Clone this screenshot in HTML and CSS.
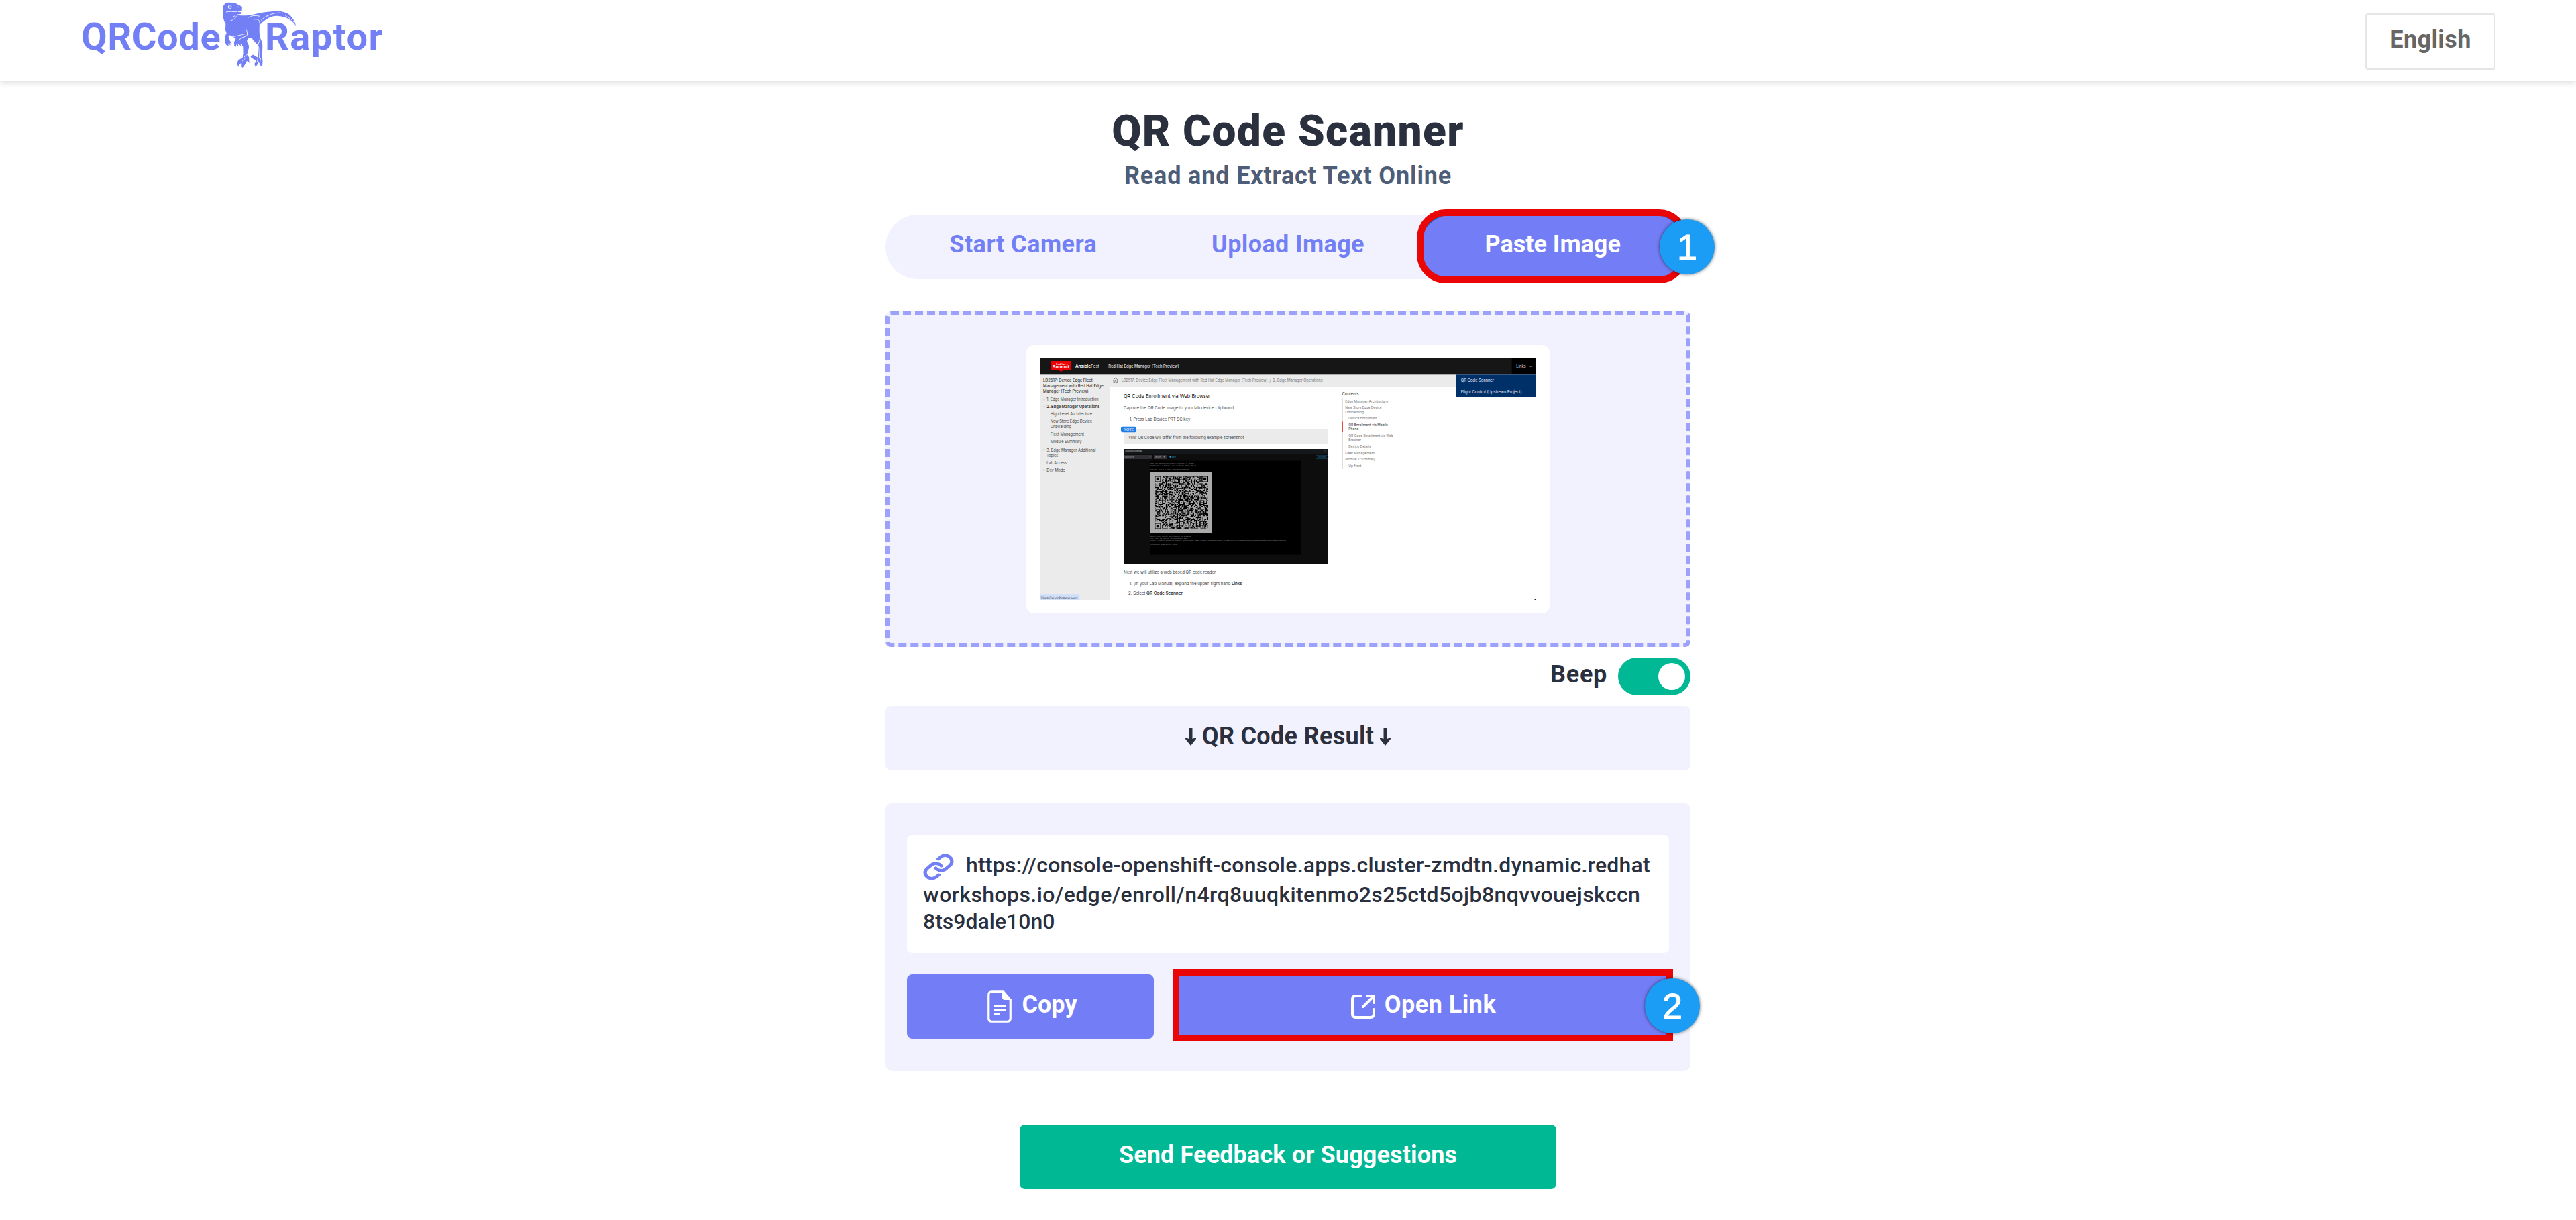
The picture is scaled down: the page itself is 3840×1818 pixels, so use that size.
FILE: index.html
```html
<!DOCTYPE html>
<html lang="en">
<head>
<meta charset="utf-8">
<title>QR Code Scanner</title>
<link rel="stylesheet" href="styles.css">
</head>
<body>
<header class="header">
  <a class="brand">
    <span class="brand-first">QRCode</span>
    <svg class="brand-raptor" viewBox="690 5 340 302">
      <path fill="#737ff5" d="M712 14L722 12L747 13L760 19L776 27L780 33L779 49L762 54L778 56L777 64L763 66L759 70C790 71 805 72 820 69C850 62 880 55 920 52C955 49 980 55 995 67C1010 80 1020 98 1024 116C1005 92 985 75 945 73C915 71 890 85 866 110L861 92C862 120 858 145 864 170L872 188C877 205 873 225 873 255L875 275L874 292L867 298L861 285L856 280L852 290L843 301L838 288L847 275L838 268L824 260L820 252L833 246L842 252L852 258L856 240L858 212L854 203C840 190 835 185 829 175C825 170 815 168 809 176C800 185 808 192 813 205C815 220 808 230 806 245L814 258L815 285L808 275L800 278L798 288L786 304L778 302L778 285L769 290L766 302L760 285L766 270L785 260L788 240L787 210L775 195L779 211L770 200L764 196L767 210L757 200L756 210L748 208L747 190L755 172L738 165L728 158L722 165L725 178L738 200L728 193L731 206L721 195L722 207L712 203L705 185L706 165L713 150L708 135L709 108C697 90 696 60 696 40C698 25 705 18 712 14Z"/>
      <g fill="none" stroke="#fff" stroke-width="2.500" stroke-linecap="round">
        <circle cx="728" cy="32" r="7.500" stroke-width="2.500"/>
        <circle cx="728" cy="32" r="2" stroke-width="1.500"/>
        <path d="M765 31l3 4M712 55C730 49 745 57 762 53M730 95Q752 88 758 73M742 76l10-4M810 80Q830 66 862 74M835 88C855 85 862 92 861 102"/>
        <path d="M738 166Q770 160 795 153M802 133Q812 160 800 163Q780 168 768 180M868 92Q880 78 900 70M895 73Q930 54 965 60M978 72Q1005 85 1016 102M853 208L864 172M862 215L860 262M790 258L806 246M796 264L778 280M854 262L850 280M866 262L862 284"/>
      </g>
    </svg>
    <span class="brand-second">Raptor</span>
  </a>
  <button class="language"><span class="label">English</span></button>
</header>

<main class="main">
  <h1 class="title">QR Code Scanner</h1>
  <p class="subtitle">Read and Extract Text Online</p>

  <nav class="tabs">
    <button class="tab tab-camera">Start Camera</button>
    <button class="tab tab-upload">Upload Image</button>
    <button class="tab tab-active">Paste Image
      <span class="mark mark-round"></span>
      <span class="step step-one">1</span>
    </button>
  </nav>

  <section class="dropzone">
    <div class="preview">
      <svg class="shot" viewBox="90 102 2220 1080">
        <rect x="90" y="102" width="2220" height="1080" fill="#fff"/>
        <rect x="90" y="174" width="312" height="1008" fill="#ebebeb"/>
        <rect x="402" y="174" width="1908" height="54" fill="#ebebeb"/>
        <rect x="90" y="102" width="2220" height="72" fill="#161616"/>
        <rect x="90" y="173" width="2220" height="3" fill="#8a8a8a"/>
        <path d="M138 114h93v42h-38l-8 7-8-7h-39z" fill="#e00"/>
        <g fill="#fff">
          <text x="163" y="131" font-size="9" font-weight="700" textLength="42">Red Hat</text>
          <text x="147" y="147" font-size="19" font-weight="700" textLength="75" lengthAdjust="spacingAndGlyphs">Summit</text>
          <text x="249" y="144" font-size="20" font-weight="600" textLength="69" lengthAdjust="spacingAndGlyphs">Ansible</text>
          <text x="319" y="144" font-size="20" font-weight="300" textLength="37" lengthAdjust="spacingAndGlyphs">Fest</text>
          <text x="397" y="145" font-size="19" textLength="316" lengthAdjust="spacingAndGlyphs">Red Hat Edge Manager (Tech Preview)</text>
        </g>
        <g fill="#444" font-size="18">
          <g font-weight="500" fill="#333">
            <text x="105" y="208" textLength="221" lengthAdjust="spacingAndGlyphs">LB2517: Device Edge Fleet</text>
            <text x="105" y="232" textLength="269" lengthAdjust="spacingAndGlyphs">Management with Red Hat Edge</text>
            <text x="105" y="256" textLength="203" lengthAdjust="spacingAndGlyphs">Manager (Tech Preview)</text>
            <text x="121" y="325" font-weight="600" textLength="237" lengthAdjust="spacingAndGlyphs">2. Edge Manager Operations</text>
          </g>
          <text x="121" y="292" textLength="232" lengthAdjust="spacingAndGlyphs">1. Edge Manager Introduction</text>
          <text x="137" y="358" textLength="187" lengthAdjust="spacingAndGlyphs">High Level Architecture</text>
          <text x="137" y="391" textLength="187" lengthAdjust="spacingAndGlyphs">New Store Edge Device</text>
          <text x="137" y="415" textLength="94" lengthAdjust="spacingAndGlyphs">Onboarding</text>
          <text x="137" y="448" textLength="151" lengthAdjust="spacingAndGlyphs">Fleet Management</text>
          <text x="137" y="481" textLength="140" lengthAdjust="spacingAndGlyphs">Module Summary</text>
          <text x="121" y="518" textLength="219" lengthAdjust="spacingAndGlyphs">3. Edge Manager Additional</text>
          <text x="121" y="542" textLength="50" lengthAdjust="spacingAndGlyphs">Topics</text>
          <text x="121" y="575" textLength="90" lengthAdjust="spacingAndGlyphs">Lab Access</text>
          <text x="121" y="608" textLength="82" lengthAdjust="spacingAndGlyphs">Dev Mode</text>
        </g>
        <path d="M107 282l5 4-5 4zM105 317h9l-4 5zM107 507l5 4-5 4zM107 597l5 4-5 4z" fill="#999"/>
        <path d="M420 197l9-7 8 7v12h-6v-7h-5v7h-6z" fill="none" stroke="#555" stroke-width="2"/>
        <text x="455" y="208" font-size="17" fill="#777" textLength="900" lengthAdjust="spacingAndGlyphs">LB2517: Device Edge Fleet Management with Red Hat Edge Manager (Tech Preview)&#160; / &#160;2. Edge Manager Operations</text>
        <g fill="#444" font-size="19">
          <text x="465" y="278" font-size="23" fill="#111" textLength="390" lengthAdjust="spacingAndGlyphs">QR Code Enrollment via Web Browser</text>
          <text x="465" y="329" textLength="492" lengthAdjust="spacingAndGlyphs">Capture the QR Code image to your lab device clipboard</text>
          <text x="491" y="382" textLength="272" lengthAdjust="spacingAndGlyphs">1. Press Lab Device PRT SC key</text>
          <rect x="465" y="420" width="915" height="66" fill="#ebebeb"/>
          <rect x="453" y="407" width="69" height="26" rx="7" fill="#1f7de8"/>
          <text class="shot-serif" x="464" y="427" font-size="17" fill="#fff" textLength="47" lengthAdjust="spacingAndGlyphs">NOTE</text>
          <text x="486" y="462" textLength="517" lengthAdjust="spacingAndGlyphs">Your QR Code will differ from the following example screenshot</text>
          <text x="465" y="1065" textLength="412" lengthAdjust="spacingAndGlyphs">Next we will utilize a web based QR code reader</text>
          <text x="491" y="1117" textLength="452" lengthAdjust="spacingAndGlyphs">1. (In your Lab Manual) expand the upper-right hand</text>
          <text x="948" y="1117" font-weight="600" fill="#333" textLength="47" lengthAdjust="spacingAndGlyphs">Links</text>
          <text x="486" y="1158" textLength="76" lengthAdjust="spacingAndGlyphs">2. Select</text>
          <text x="567" y="1158" font-weight="600" fill="#333" textLength="162" lengthAdjust="spacingAndGlyphs">QR Code Scanner</text>
        </g>
        <rect x="465" y="507" width="915" height="516" fill="#0d0d0d"/>
        <rect x="465" y="507" width="915" height="21" fill="#15181b"/>
        <rect x="465" y="1020" width="915" height="3" fill="#555"/>
        <rect x="585" y="560" width="673" height="420" fill="#000"/>
        <rect x="465" y="534" width="129" height="18" fill="#303034"/>
        <rect x="600" y="534" width="57" height="18" fill="#303034"/>
        <rect x="1325" y="536" width="54" height="15" rx="2" fill="none" stroke="#12506e" stroke-width="2"/>
        <path d="M581 541h6l-3 4zM643 541h6l-3 4z" fill="#aaa"/>
        <path d="M670 539h5v4h4v5h-6v-4h-3z" fill="#2a9ad6"/>
        <g font-size="8" fill="#aaa">
          <text x="472" y="520" font-weight="600" textLength="77" lengthAdjust="spacingAndGlyphs">Guest login credentials</text>
          <text x="469" y="546" textLength="42" lengthAdjust="spacingAndGlyphs">VNC console</text>
          <text x="603" y="546" textLength="30" lengthAdjust="spacingAndGlyphs">Send key</text>
          <text x="681" y="546" fill="#2a9ad6" textLength="17" lengthAdjust="spacingAndGlyphs">Paste</text>
          <text x="1335" y="546" fill="#1c7fae" textLength="37" lengthAdjust="spacingAndGlyphs">Disconnect</text>
          <path d="M1365 514l4 4M1369 514l-4 4" stroke="#999"/>
        </g>
        <g class="shot-mono" font-size="6" fill="#999">
          <text x="586" y="574" textLength="194" lengthAdjust="spacingAndGlyphs">Red Hat Enterprise Linux 9.20250204.0 (Plow)</text>
          <text x="586" y="583" textLength="203" lengthAdjust="spacingAndGlyphs">Kernel 5.14.0-503.22.1.el9_5.x86_64 on an x86_64</text>
          <text x="586" y="600" textLength="173" lengthAdjust="spacingAndGlyphs">enp1s0: 10.0.2.2 fe80::c5eb:5ec7:567:60b8</text>
          <text x="586" y="901" textLength="182" lengthAdjust="spacingAndGlyphs">Enroll your device to flightctl by scanning</text>
          <text x="586" y="910" textLength="166" lengthAdjust="spacingAndGlyphs">the above QR code or following this URL:</text>
          <text x="586" y="919" textLength="605" lengthAdjust="spacingAndGlyphs">https://console-openshift-console.apps.cluster-zmdtn.dynamic.redhatworkshops.io/edge/enroll/n4rq8uuqkitenmo2s25ctd5ojb8nqvvouejskccn8ts9dale10n0</text>
          <text x="586" y="936" textLength="131" lengthAdjust="spacingAndGlyphs">okay-small-edge-device login: _</text>
        </g>
        <rect x="585" y="609" width="276" height="275" fill="#aaa"/>
        <svg x="603" y="627" width="240" height="240" viewBox="0 0 57 57"><path id="qr" fill="#000"/></svg>

        <rect x="2201" y="102" width="109" height="72" fill="#000"/>
        <text x="2221" y="144" font-size="17" fill="#ddd" textLength="43" lengthAdjust="spacingAndGlyphs">Links</text>
        <path d="M2279 136l6 4 6-4" fill="none" stroke="#ccc" stroke-width="2"/>
        <rect x="1953" y="175" width="357" height="101" fill="#003068"/>
        <g font-size="18" fill="#eef">
          <text x="1973" y="206" textLength="148" lengthAdjust="spacingAndGlyphs">QR Code Scanner</text>
          <text x="1973" y="257" textLength="273" lengthAdjust="spacingAndGlyphs">Flight Control (Upstream Project)</text>
        </g>
        <rect x="1443" y="279" width="3" height="318" fill="#ddd"/>
        <rect x="1443" y="385" width="3" height="47" fill="#e8473f"/>
        <g font-size="15" fill="#777">
          <text x="1442" y="268" font-size="17" font-weight="500" fill="#444" textLength="75" lengthAdjust="spacingAndGlyphs">Contents</text>
          <text x="1456" y="299" textLength="191" lengthAdjust="spacingAndGlyphs">Edge Manager Architecture</text>
          <text x="1456" y="328" textLength="163" lengthAdjust="spacingAndGlyphs">New Store Edge Device</text>
          <text x="1456" y="347" textLength="83" lengthAdjust="spacingAndGlyphs">Onboarding</text>
          <text x="1471" y="376" textLength="127" lengthAdjust="spacingAndGlyphs">Device Enrollment</text>
          <text x="1471" y="405" fill="#333" textLength="176" lengthAdjust="spacingAndGlyphs">QR Enrollment via Mobile</text>
          <text x="1471" y="424" fill="#333" textLength="45" lengthAdjust="spacingAndGlyphs">Phone</text>
          <text x="1471" y="453" textLength="200" lengthAdjust="spacingAndGlyphs">QR Code Enrollment via Web</text>
          <text x="1471" y="472" textLength="56" lengthAdjust="spacingAndGlyphs">Browser</text>
          <text x="1471" y="501" textLength="99" lengthAdjust="spacingAndGlyphs">Device Details</text>
          <text x="1456" y="530" textLength="131" lengthAdjust="spacingAndGlyphs">Fleet Management</text>
          <text x="1456" y="559" textLength="134" lengthAdjust="spacingAndGlyphs">Module 2 Summary</text>
          <text x="1471" y="588" textLength="57" lengthAdjust="spacingAndGlyphs">Up Next</text>
        </g>
        <path d="M90 1156h172q6 0 6 6v20H90z" fill="#cfdffb"/>
        <text x="95" y="1176" font-size="16" fill="#555" textLength="164" lengthAdjust="spacingAndGlyphs">https://qrcoderaptor.com</text>
        <path d="M2310 1173v9h-9z" fill="#222"/>
      </svg>
    </div>
  </section>

  <div class="beep">
    <span class="beep-label">Beep</span>
    <span class="toggle"><span class="knob"></span></span>
  </div>

  <div class="result-title">
    <svg class="arrow" viewBox="0 0 16 26"><path d="M5.500 0h5v16l5.500-2v2L8 26 0 16v-2l5.500 2z"/></svg>
    <span class="result-label">QR Code Result</span>
    <svg class="arrow" viewBox="0 0 16 26"><path d="M5.500 0h5v16l5.500-2v2L8 26 0 16v-2l5.500 2z"/></svg>
  </div>

  <section class="panel">
    <div class="result">
      <div class="line line-first">
        <svg class="link-icon" viewBox="1 1 22 22" preserveAspectRatio="none"><path d="M10 13a5 5 0 0 0 7.540.540l3-3a5 5 0 0 0-7.070-7.070l-1.720 1.710M14 11a5 5 0 0 0-7.540-.540l-3 3a5 5 0 0 0 7.070 7.070l1.710-1.710"/></svg>
        <span>https://console-openshift-console.apps.cluster-zmdtn.dynamic.redhat</span>
      </div>
      <div class="line line-second">workshops.io/edge/enroll/n4rq8uuqkitenmo2s25ctd5ojb8nqvvouejskccn</div>
      <div class="line">8ts9dale10n0</div>
    </div>
    <div class="actions">
      <button class="action action-copy">
        <svg class="copy-icon" viewBox="0 0 36 48">
          <path d="M6.500 1.750h17L34.250 14v27.500q0 4.750-4.750 4.750h-23q-4.750 0-4.750-4.750v-35q0-4.750 4.750-4.750z" fill="none" stroke="#fff" stroke-width="3.200"/>
          <path d="M22 1h3l11 13H26q-4 0-4-4z" fill="#fff"/>
          <path d="M10.500 23h15.500M10.500 29h15.500M10.500 35h6.500" stroke="#fff" stroke-width="3" stroke-linecap="round"/>
        </svg>
        <span class="label">Copy</span>
      </button>
      <button class="action action-open">
        <svg class="open-icon" viewBox="0 0 36 36"><path d="M14 2H7Q2 2 2 7v22q0 5 5 5h22q5 0 5-5v-7M24 2h10v10M18 18L33 3"/></svg>
        <span class="label">Open Link</span>
        <span class="mark mark-square"></span>
        <span class="step step-two">2</span>
      </button>
    </div>
  </section>

  <button class="feedback">Send Feedback or Suggestions</button>
</main>
<script src="qr.js"></script>
</body>
</html>
```

FILE: styles.css
```css
* { box-sizing: border-box; }

body {
  margin: 0;
  background: #fff;
  color: #2a303d;
  font-family: Roboto, "Open Sans", sans-serif;
  font-size: 36px;
  font-weight: 700;
}

button {
  margin: 0;
  padding: 0;
  border: 0;
  color: inherit;
  font: inherit;
}

.label { padding-bottom: 6px; }

/* Header */
.header {
  display: flex;
  align-items: center;
  justify-content: space-between;
  height: 120px;
  padding: 0 120px;
  background: #fff;
  box-shadow: 0 4px 8px rgba(0, 0, 0, 0.12);
}
.brand {
  display: flex;
  align-items: flex-start;
  height: 120px;
  color: #737ff5;
  font-size: 56px;
  line-height: 110px;
}
.brand-first { width: 210px; padding-left: 1px; letter-spacing: 0.65px; }
.brand-raptor { width: 113px; height: 101px; margin: 1px -48px 0 0; }
.brand-second { letter-spacing: 1.47px; }
.language {
  display: flex;
  align-items: center;
  justify-content: center;
  width: 194px;
  height: 84px;
  margin-top: 4px;
  border: 2px solid #e6e6e6;
  border-radius: 4px;
  background: #fff;
  color: #666;
  letter-spacing: 0.4px;
}

/* Page column */
.main {
  display: flex;
  flex-direction: column;
  width: 1200px;
  margin: 0 auto;
  padding-top: 36px;
}
.title {
  margin: 0;
  font-size: 64px;
  font-weight: 900;
  line-height: 80px;
  letter-spacing: 1.35px;
  text-align: center;
}
.subtitle {
  margin: 2px 0 34px;
  color: #4e5d78;
  line-height: 48px;
  letter-spacing: 0.85px;
  text-align: center;
}

/* Tabs */
.tabs {
  display: flex;
  height: 96px;
  padding: 0 8px;
  border-radius: 48px;
  background: #f2f2fe;
}
.tab {
  position: relative;
  flex: 1;
  padding-bottom: 8px;
  border-radius: 48px;
  background: none;
  color: #737ff5;
}
.tab-camera { letter-spacing: 0.5px; }
.tab-upload { letter-spacing: 0.38px; }
.tab-active {
  background: #737df5;
  box-shadow: 0 0 0 3px #0c63cb;
  color: #fff;
}

/* Numbered callouts */
.mark { position: absolute; border: 10px solid #ea0606; }
.mark-round { inset: -8px -4px -6px -5px; border-radius: 43px; }
.mark-square { inset: -8px -6px -4px -4px; }
.step {
  position: absolute;
  width: 82px;
  height: 82px;
  border-radius: 50%;
  background: #1b9df5;
  box-shadow: 0 0 5px rgba(0, 0, 0, 0.6);
  color: #fff;
  font: 400 54px/82px "Liberation Sans", sans-serif;
  letter-spacing: 0;
  text-align: center;
  -webkit-text-stroke: 1px #fff;
}
.step-one { top: 7px; right: -44px; }
.step-two { top: 6px; right: -46px; }

/* Pasted picture */
.dropzone {
  display: flex;
  align-items: center;
  justify-content: center;
  height: 500px;
  margin-top: 48px;
  border: 6px dashed #9ca2fb;
  border-radius: 8px;
  background: #f2f2fe;
}
.preview {
  width: 780px;
  height: 400px;
  padding: 20px;
  border-radius: 12px;
  background: #fff;
}
.shot { display: block; width: 740px; height: 360px; font-family: Inter, sans-serif; font-weight: 400; }
.shot-serif { font-family: "Liberation Serif", serif; }
.shot-mono { font-family: "Liberation Mono", monospace; }

/* Beep switch */
.beep {
  display: flex;
  justify-content: flex-end;
  gap: 16px;
  margin-top: 16px;
}
.beep-label { line-height: 50px; letter-spacing: 0.7px; }
.toggle {
  display: flex;
  justify-content: flex-end;
  width: 108px;
  height: 56px;
  padding: 8px;
  border-radius: 28px;
  background: #00b894;
}
.knob { width: 40px; height: 40px; border-radius: 50%; background: #fff; }

/* Result */
.result-title {
  display: flex;
  align-items: center;
  justify-content: center;
  gap: 9px;
  height: 96px;
  margin-top: 16px;
  padding-bottom: 6px;
  border-radius: 8px;
  background: #f2f2fe;
}
.result-label { letter-spacing: 0.3px; }
.arrow { width: 16px; height: 26px; margin-top: 2px; fill: #2a303d; }
.panel {
  height: 400px;
  margin-top: 48px;
  padding: 48px 32px;
  border-radius: 10px;
  background: #f2f2fe;
}
.result {
  height: 176px;
  padding: 25px 24px 0;
  border-radius: 8px;
  background: #fff;
  font-size: 32px;
  font-weight: 500;
  line-height: 40px;
}
.line { white-space: nowrap; }
.line-first { display: flex; gap: 19px; height: 44px; letter-spacing: 0.24px; }
.line-second { letter-spacing: 0.4px; }
.link-icon {
  width: 44px;
  height: 38px;
  margin: 4px 0 0 1px;
  overflow: visible;
  fill: none;
  stroke: #737ff5;
  stroke-width: 2.6;
  stroke-linecap: round;
}
.actions { display: flex; gap: 32px; margin-top: 32px; }
.action {
  position: relative;
  display: flex;
  align-items: center;
  justify-content: center;
  height: 96px;
  border-radius: 8px;
  background: #737df5;
  color: #fff;
}
.action-copy { width: 368px; gap: 15px; padding-left: 6px; }
.action-open { flex: 1; gap: 14px; padding-left: 4px; letter-spacing: 0.5px; }
.copy-icon { width: 36px; height: 48px; }
.open-icon {
  width: 36px;
  height: 36px;
  fill: none;
  stroke: #fff;
  stroke-width: 4;
  stroke-linecap: round;
}

.feedback {
  align-self: center;
  width: 800px;
  height: 96px;
  margin-top: 80px;
  padding-bottom: 6px;
  border-radius: 8px;
  background: #00b894;
  color: #fff;
  letter-spacing: 0.13px;
}
```

FILE: qr.js
```js
// Draws the 57-module code: random-looking data, three finders and the alignment squares.
(function () {
  const size = 57;
  let seed = 20257;
  const grid = [];
  for (let y = 0; y < size; y++) {
    grid.push([]);
    for (let x = 0; x < size; x++) {
      seed = (seed * 1103515245 + 12345) % 2147483648;
      grid[y].push(seed / 2147483648 > 0.5);
    }
  }
  function square(cx, cy, reach, light) {
    for (let dy = -reach; dy <= reach; dy++) {
      for (let dx = -reach; dx <= reach; dx++) {
        const x = cx + dx, y = cy + dy;
        if (x < 0 || y < 0 || x >= size || y >= size) continue;
        grid[y][x] = !light.includes(Math.max(Math.abs(dx), Math.abs(dy)));
      }
    }
  }
  square(3, 3, 4, [2, 4]);
  square(size - 4, 3, 4, [2, 4]);
  square(3, size - 4, 4, [2, 4]);
  [[6, 28], [28, 6], [28, 28], [28, 50], [50, 28], [50, 50]].forEach(function (p) {
    square(p[0], p[1], 2, [1]);
  });
  let d = "";
  grid.forEach(function (row, y) {
    row.forEach(function (on, x) {
      if (on) d += "M" + x + " " + y + "h1v1h-1z";
    });
  });
  document.getElementById("qr").setAttribute("d", d);
})();
```
